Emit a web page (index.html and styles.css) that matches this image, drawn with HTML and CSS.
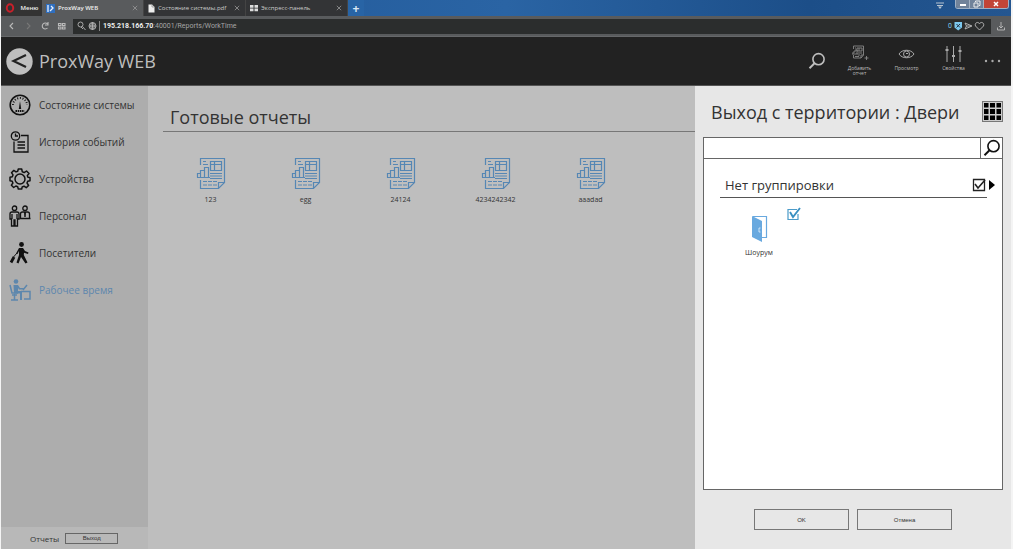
FILE: index.html
```html
<!DOCTYPE html>
<html lang="ru">
<head>
<meta charset="utf-8">
<title>ProxWay WEB</title>
<link rel="stylesheet" href="styles.css">
</head>
<body>
<svg class="defs" aria-hidden="true">
  <symbol id="report" viewBox="0 0 30 34">
    <g fill="none" stroke="currentColor" stroke-width="1.200">
      <path d="M4.500 9V2.500H28.500V26.500L22.500 32.500H4.500V24M22.500 32.500V26.500H28.500"/>
      <path d="M14.500 5.500H25.500V14.500H14.500ZM14.500 8.500H25.500M18.500 5.500V14.500M7 5.500H10M7 8.500H12"/>
      <path d="M1 21.500H14M1.500 21.500V17.500H4.500V21.500M4.500 17.500V14.500H8.500V21.500M8.500 14.500V11.500H12.500V21.500M14 17.500H26M14 20H26M14 22.500H26"/>
      <path d="M7 25.500H21M7 29H21" stroke-dasharray="4 1"/>
    </g>
  </symbol>
  <symbol id="lens" viewBox="0 0 18 18">
    <g fill="none" stroke="currentColor"><circle cx="10.500" cy="7.200" r="5.600" stroke-width="1.600"/><path d="M6.500 11.200L1.500 16.200" stroke-width="2"/></g>
  </symbol>
  <symbol id="close" viewBox="0 0 6 6"><path d="M.8.8L5.200 5.200M5.200.8L.8 5.200" stroke="#999" stroke-width=".8"/></symbol>
</svg>

<div class="browser">
  <div class="tabs">
    <button class="menu"><svg width="10" height="10" viewBox="0 0 10 10"><ellipse cx="5" cy="5" rx="3.200" ry="3.800" fill="none" stroke="#c8202a" stroke-width="2"/></svg>Меню</button>
    <button class="tab active"><svg width="9" height="9" viewBox="0 0 9 9"><rect width="9" height="9" fill="#2f6fc0"/><path d="M2 1V8M5 2L7 4L4 7" stroke="#e8f0ff" stroke-width="1.300" fill="none"/></svg><span>ProxWay WEB</span><svg width="6" height="6"><use href="#close"/></svg></button>
    <button class="tab"><svg width="7" height="9" viewBox="0 0 7 9"><path d="M.5.500H4L6.500 3V8.500H.5Z" fill="#eee"/><path d="M4 .5V3H6.500" fill="none" stroke="#888" stroke-width=".7"/></svg><span>Состояние системы.pdf</span><svg width="6" height="6"><use href="#close"/></svg></button>
    <button class="tab"><svg width="8" height="8" viewBox="0 0 8 8"><path d="M0 1H3.500V3.700H0ZM4.500 1H8V3.700H4.500ZM0 4.500H3.500V7.200H0ZM4.500 4.500H8V7.200H4.500Z" fill="#ddd"/></svg><span>Экспресс-панель</span><svg width="6" height="6"><use href="#close"/></svg></button>
    <button class="plus" aria-label="Новая вкладка">+</button>
    <svg class="tray" width="8" height="8" viewBox="0 0 8 8"><path d="M0 1H8M1 3.500H7" stroke="#b8c4d0"/><path d="M2 4.500H6L4 7Z" fill="#b8c4d0"/></svg>
    <div class="win">
      <button aria-label="Свернуть"><svg width="8" height="6" viewBox="0 0 8 6"><path d="M1 4H7" stroke="#fff" stroke-width="2"/></svg></button>
      <button aria-label="Развернуть"><svg width="8" height="8" viewBox="0 0 8 8"><path d="M2.500 2V1H7V5.500H6M1 3H5V7H1Z" fill="none" stroke="#eee"/></svg></button>
      <button class="x" aria-label="Закрыть"><svg width="6" height="6" viewBox="0 0 6 6"><path d="M1 1L5 5M5 1L1 5" stroke="#fff" stroke-width="1.500"/></svg></button>
    </div>
  </div>
  <div class="address">
    <svg width="70" height="12" viewBox="0 0 70 12"><g fill="none" stroke="#bbb" stroke-width="1.100"><path d="M12 3L9 6L12 9"/><path d="M26 3L29 6L26 9" stroke="#777"/><path d="M46.500 4A3 3 0 1 0 46.500 8M47 2V5H44"/><path d="M57.500 3.500H60V5.500H57.500ZM61.500 3.500H64V5.500H61.500ZM57.500 7H60V9H57.500ZM61.500 7H64V9H61.500Z"/></g></svg>
    <div class="url">
      <svg width="20" height="10" viewBox="0 0 20 10"><g fill="none" stroke="#b5b5b5" stroke-width=".9"><circle cx="3.500" cy="3.500" r="2.500"/><path d="M5.500 5.500L8.500 9M4 6L6 8"/><circle cx="15.500" cy="5" r="3.500"/><path d="M12 5H19M15.500 1.500V8.500"/><ellipse cx="15.500" cy="5" rx="1.700" ry="3.500"/></g></svg>
      <span class="addr"><b>195.218.166.70</b>:40001/Reports/WorkTime</span>
      <span class="zero">0</span>
      <svg width="34" height="10" viewBox="0 0 34 10"><path d="M.5 1H8V6.500L4.200 9.500L.5 6.500Z" fill="#7cc8ee"/><path d="M2.500 3L6 6.500M6 3L2.500 6.500" stroke="#234"/><g fill="none" stroke="#bbb" stroke-width=".9"><path d="M11 2L18 5L11 8L12.500 5ZM12.500 5H17"/><path d="M25.500 9L21.500 5C20.200 2 24 0 25.500 2.800C27 0 30.800 2 29.500 5Z"/></g></svg>
    </div>
    <svg class="down" width="8" height="9" viewBox="0 0 8 9"><path d="M4 0V6M2 4L4 6L6 4M.5 5.500V8H7.500V5.500" fill="none" stroke="#bbb" stroke-width=".9"/></svg>
  </div>
</div>

<header class="top">
  <button class="back" aria-label="Назад"><svg width="27" height="27" viewBox="0 0 27 27"><circle cx="13.500" cy="13.500" r="13.200" fill="#bebebe"/><path d="M20 7L7.500 13L20 19" fill="none" stroke="#222" stroke-width="2.200"/></svg></button>
  <h1>ProxWay WEB</h1>
  <button class="search" aria-label="Поиск"><svg width="18" height="18"><use href="#lens"/></svg></button>
  <button class="tool"><svg width="19" height="17" viewBox="0 0 19 17"><g fill="none" stroke="#888" stroke-width=".9"><path d="M3.500 4V1H13.500V10L11 13H3.500V10M11 13V10H13.500"/><path d="M7 3H12V6H7ZM9 3V6M2 9H8M3 9V7H5V5H7V9M8 8H12M8 10H10M5 11.500H9M5 3H6"/><path d="M16.500 11V15M14.500 13H18.500"/></g></svg><span>Добавить отчет</span></button>
  <button class="tool"><svg width="17" height="17" viewBox="0 0 17 17"><g fill="none" stroke="#aaa"><path d="M1 9C4 4 13 4 16 9C13 14 4 14 1 9Z"/><circle cx="8.500" cy="9" r="3"/><path d="M10 8.500H8"/></g></svg><span>Просмотр</span></button>
  <button class="tool"><svg width="17" height="17" viewBox="0 0 17 17"><path d="M2 1V17M8.500 1V17M15 1V17" stroke="#aaa"/><path d="M.5 5H3.500M7 11H10M13.500 6H16.500" stroke="#aaa" stroke-width="2"/></svg><span>Свойства</span></button>
  <button class="more" aria-label="Ещё"><svg width="17" height="4" viewBox="0 0 17 4"><g fill="#aaa"><circle cx="2" cy="2" r="1.200"/><circle cx="8.500" cy="2" r="1.200"/><circle cx="15" cy="2" r="1.200"/></g></svg></button>
</header>

<div class="work">
  <aside class="side">
    <nav>
      <a href="#"><svg width="22" height="22" viewBox="0 0 22 22"><circle cx="11" cy="11" r="9.800" fill="none" stroke="#111" stroke-width="1.600"/><path d="M4 11A7 7 0 0 1 18 11" fill="none" stroke="#111" stroke-width="2" stroke-dasharray="1 1.700"/><path d="M11 7L12.200 15H9.800Z" fill="#111"/><path d="M6.500 17H15.500" stroke="#111" stroke-width="1.800" stroke-dasharray="1.500 .7"/></svg>Состояние системы</a>
      <a href="#"><svg width="22" height="22" viewBox="0 0 22 22"><g fill="none" stroke="#111" stroke-width="1.300"><circle cx="6.500" cy="5" r="4.200"/><path d="M6.500 2.500V5H9M12 4.500H19V21H5V10.500M8.500 11H16M8.500 14H16M8.500 17H16"/></g></svg>История событий</a>
      <a href="#"><svg width="22" height="22" viewBox="0 0 22 22"><g fill="none" stroke="#111" stroke-width="1.500" stroke-linejoin="round"><circle cx="11" cy="11" r="5"/><path d="M9.300 1H12.700L13.300 3.800L15.200 4.600L17.500 3L20 5.500L18.300 7.600L18.900 9.300L21 9.500V12.700L18.700 13.300L18 15L19.600 17.400L17.200 19.700L15 18.200L13.200 18.900L12.700 21H9.300L8.700 18.700L6.900 18L4.700 19.500L2.400 17.200L3.900 15L3.200 13.200L1 12.700V9.300L3.300 8.700L4 6.900L2.500 4.700L4.800 2.400L7 3.900L8.700 3.200Z"/></g></svg>Устройства</a>
      <a href="#"><svg width="22" height="22" viewBox="0 0 22 22"><g fill="none" stroke="#111" stroke-width="1.300"><circle cx="5.500" cy="3.200" r="2.200"/><path d="M3 7H8Q10 7 10 9V14H8.500V21H6V15H5V21H2.500V14H1V9Q1 7 3 7M3 9V14M8 9V14"/><circle cx="16" cy="3.200" r="2.200"/><path d="M11.500 13V9Q11.500 7 13.500 7H18.500Q20.500 7 20.500 9V13M10.500 13.500H21.500"/></g><path d="M15 7H17L16.700 12H15.300Z" fill="#111"/></svg>Персонал</a>
      <a href="#"><svg width="22" height="22" viewBox="0 0 22 22"><circle cx="12.500" cy="2.500" r="2.400" fill="#111"/><path d="M10 6H14L16 9L19.500 10.500L19 12L15 10.800L14.800 13L18.500 20.500L16.500 21.500L12 15L9.500 21.500L7.500 20.500L10 13V9L8.500 12L7 11.500Z" fill="#111"/><path d="M2 20.500L5 15" stroke="#111" stroke-width="2.800"/><path d="M4.500 15L8 11" stroke="#111"/></svg>Посетители</a>
      <a href="#" class="current"><svg width="22" height="22" viewBox="0 0 22 22"><g fill="none" stroke="#5d87ad" stroke-width="1.500"><path d="M1 6L3 14H9M3 16H8M5.500 15V21M2 21H9M12 12.500H21V20H15M14 11L18 6"/></g><circle cx="7" cy="2.500" r="2.300" fill="#5d87ad"/><path d="M4.500 6H9L11 9H15V10.500H10L9 9V12H13V21H11V14.500H5Z" fill="#5d87ad"/></svg>Рабочее время</a>
    </nav>
    <div class="exit"><span>Отчеты</span><button>Выход</button></div>
  </aside>

  <main>
    <h2>Готовые отчеты</h2>
    <ul class="reports">
      <li><svg width="30" height="34"><use href="#report"/></svg>123</li>
      <li><svg width="30" height="34"><use href="#report"/></svg>egg</li>
      <li><svg width="30" height="34"><use href="#report"/></svg>24124</li>
      <li><svg width="30" height="34"><use href="#report"/></svg>4234242342</li>
      <li><svg width="30" height="34"><use href="#report"/></svg>aaadad</li>
    </ul>
  </main>

  <section class="panel">
    <div class="head">
      <h2>Выход с территории : Двери</h2>
      <button aria-label="Плитка"><svg width="21" height="21" viewBox="0 0 21 21"><rect x=".5" y=".5" width="20" height="20" fill="#ccc" stroke="#777"/><path d="M2 2H6.500V6.500H2ZM8 2H13V6.500H8ZM14.500 2H19V6.500H14.500ZM2 8H6.500V13H2ZM8 8H13V13H8ZM14.500 8H19V13H14.500ZM2 14.500H6.500V19H2ZM8 14.500H13V19H8ZM14.500 14.500H19V19H14.500Z" fill="#000"/></svg></button>
    </div>
    <div class="box">
      <form class="find">
        <input type="text" aria-label="Поиск дверей">
        <button type="button" aria-label="Найти"><svg width="18" height="18"><use href="#lens"/></svg></button>
      </form>
      <div class="group">
        <label for="all">Нет группировки</label>
        <span class="tick"><input type="checkbox" id="all" checked><svg width="14" height="14" viewBox="0 0 14 14"><path d="M1.500 1.500H12.500V12.500H1.500Z" fill="none" stroke="#222" stroke-width="1.300"/><path d="M3 6L6 10L13 2" fill="none" stroke="#222" stroke-width="1.600"/></svg></span>
        <button aria-label="Развернуть группу"><svg width="6" height="10" viewBox="0 0 6 10"><path d="M0 0L6 5L0 10Z" fill="#000"/></svg></button>
      </div>
      <div class="door">
        <label for="d1"><svg width="17" height="28" viewBox="0 0 17 28"><path d="M2 1.500H15.500V22.500H11" fill="none" stroke="#69a9df" stroke-width="1.200"/><path d="M1 1L11 6V27L1 22Z" fill="#69a9df"/><path d="M9.500 13H8V17H9.500" fill="none" stroke="#e5f2fd" stroke-width=".8"/></svg>Шоурум</label>
        <span class="tick"><input type="checkbox" id="d1" checked><svg width="14" height="14" viewBox="0 0 14 14"><path d="M11 7V12.500H1V2.500H10" fill="none" stroke="#4a9bc9" stroke-width="1.200"/><path d="M3 5L6 10L13 1" fill="none" stroke="#3a90c2" stroke-width="1.900"/></svg></span>
      </div>
    </div>
    <div class="actions"><button>OK</button><button>Отмена</button></div>
  </section>
</div>
</body>
</html>
```
FILE: styles.css
```css
* { box-sizing: border-box; }
body {
  margin: 0;
  padding: 0 2px 0 1px;
  min-height: 100vh;
  display: flex;
  flex-direction: column;
  background: #f4f4f4;
  color: #333;
  font-family: "Open Sans", "Noto Sans", sans-serif;
}
button {
  border: 0;
  padding: 0;
  background: none;
  color: inherit;
  font-family: inherit;
  display: flex;
  align-items: center;
  justify-content: center;
}
svg { display: block; flex: none; }
h1, h2 { margin: 0; font-weight: 400; }
.defs { position: absolute; width: 0; height: 0; }

.tabs {
  display: flex;
  height: 16px;
  background: linear-gradient(90deg, #1e5596, #2a64a4 50%, #1c4e88 80%, #245690);
}
.tabs button { font-size: 6px; color: #ccc; }
.tabs .menu { width: 41px; gap: 6px; background: #333; color: #eee; font-weight: 600; }
.tabs .tab { width: 102px; padding: 0 5px 0 4px; gap: 3px; background: #333436; border-right: 1px solid #444; }
.tabs .tab span { flex: 1; text-align: left; white-space: nowrap; }
.tabs .active { background: #595b5d; color: #eee; font-weight: 600; }
.tabs .plus { width: 16px; font-size: 12px; font-weight: 700; color: #dbe8f5; background: #2864a5; }
.tray { margin: 2px 11px 0 auto; }
.win { display: flex; height: 9px; margin-right: 2px; border: 1px solid #9fb0c4; border-top: 0; border-radius: 0 0 3px 3px; overflow: hidden; }
.win button { width: 14px; background: #71839a; border-right: 1px solid #a5b2c2; }
.win .x { width: 24px; background: #c24537; border: 0; }

.address { display: flex; align-items: center; height: 21px; background: #595b5d; border-bottom: 1px solid #66686a; }
.url { flex: 1; display: flex; align-items: center; height: 15px; padding: 0 3px 0 4px; margin-left: 2px; background: #2b2d2d; color: #a5a5a5; font-family: Roboto, sans-serif; font-size: 7px; }
.addr { flex: 1; margin-left: 2px; padding-left: 3px; border-left: 1px solid #888; line-height: 10px; }
.addr b { color: #eee; }
.zero { color: #7cc8ee; margin-right: 2px; }
.down { margin: 0 6px; }

.top { display: flex; align-items: center; height: 49px; padding: 0 10px 0 5px; background: #222; color: #bebebe; border-bottom: 1px solid #555; }
.top h1 { flex: 1; margin-left: 6px; font-size: 18px; }
.search { margin-right: 10px; }
.tool { width: 47px; height: 42px; flex-direction: column; justify-content: flex-start; gap: 4px; padding-top: 5px; font-size: 5px; line-height: 5px; color: #bbb; }
.tool span { width: 30px; text-align: center; }
.more { margin-left: 7px; }

.work { flex: 1; display: flex; }
.side { width: 147px; display: flex; flex-direction: column; background: #adadad; }
nav { flex: 1; }
nav a { display: flex; align-items: center; height: 37px; gap: 8px; padding-left: 8px; font-size: 10px; color: #333; text-decoration: none; white-space: nowrap; }
nav .current { color: #5d87ad; }
.exit { display: flex; align-items: center; height: 22px; gap: 6px; padding-left: 29px; background: #b8b8b8; font-size: 8px; }
.exit button { width: 53px; height: 11px; border: 1px solid #666; font: 6px "Liberation Sans", sans-serif; }

main { flex: 1; background: #bebebe; padding-left: 15px; }
main h2 { height: 46px; padding: 18px 0 0 7px; border-bottom: 1px solid #777; font-size: 18px; line-height: 26px; }
.reports { display: flex; margin: 0; padding: 24px 0 0; list-style: none; }
.reports li { width: 95px; display: flex; flex-direction: column; align-items: center; font-size: 7px; line-height: 10px; gap: 5px; }
.reports svg { color: #5687b4; }

.panel { width: 316px; display: flex; flex-direction: column; padding: 0 8px 19px; background: #e7e7e7; }
.head { display: flex; align-items: center; justify-content: space-between; height: 51px; padding-left: 8px; }
.head h2 { font-size: 18px; white-space: nowrap; }
.box { flex: 1; background: #fff; border: 1px solid #666; }
.find { display: flex; height: 21px; border-bottom: 1px solid #666; }
.find input { flex: 1; min-width: 0; border: 0; background: none; }
.find button { width: 22px; border-left: 1px solid #666; color: #111; }
.group { display: flex; align-items: center; height: 39px; margin: 0 15px 0 16px; padding-top: 14px; border-bottom: 1px solid #555; font-size: 13px; }
.group label { flex: 1; padding-left: 5px; }
.group button { margin: 0 -8px 0 3px; }
.tick { display: grid; }
.tick > * { grid-area: 1 / 1; margin: 0; width: 14px; height: 14px; }
.tick input { opacity: 0; }
.door { display: flex; gap: 12px; padding: 9px 0 0 39px; }
.door label { display: flex; flex-direction: column; align-items: center; gap: 5px; width: 32px; padding-top: 8px; font-size: 7px; line-height: 10px; }
.actions { display: flex; justify-content: center; gap: 8px; padding-top: 19px; }
.actions button { width: 95px; height: 21px; border: 1px solid #777; font: 6px "Liberation Sans", sans-serif; }
```
